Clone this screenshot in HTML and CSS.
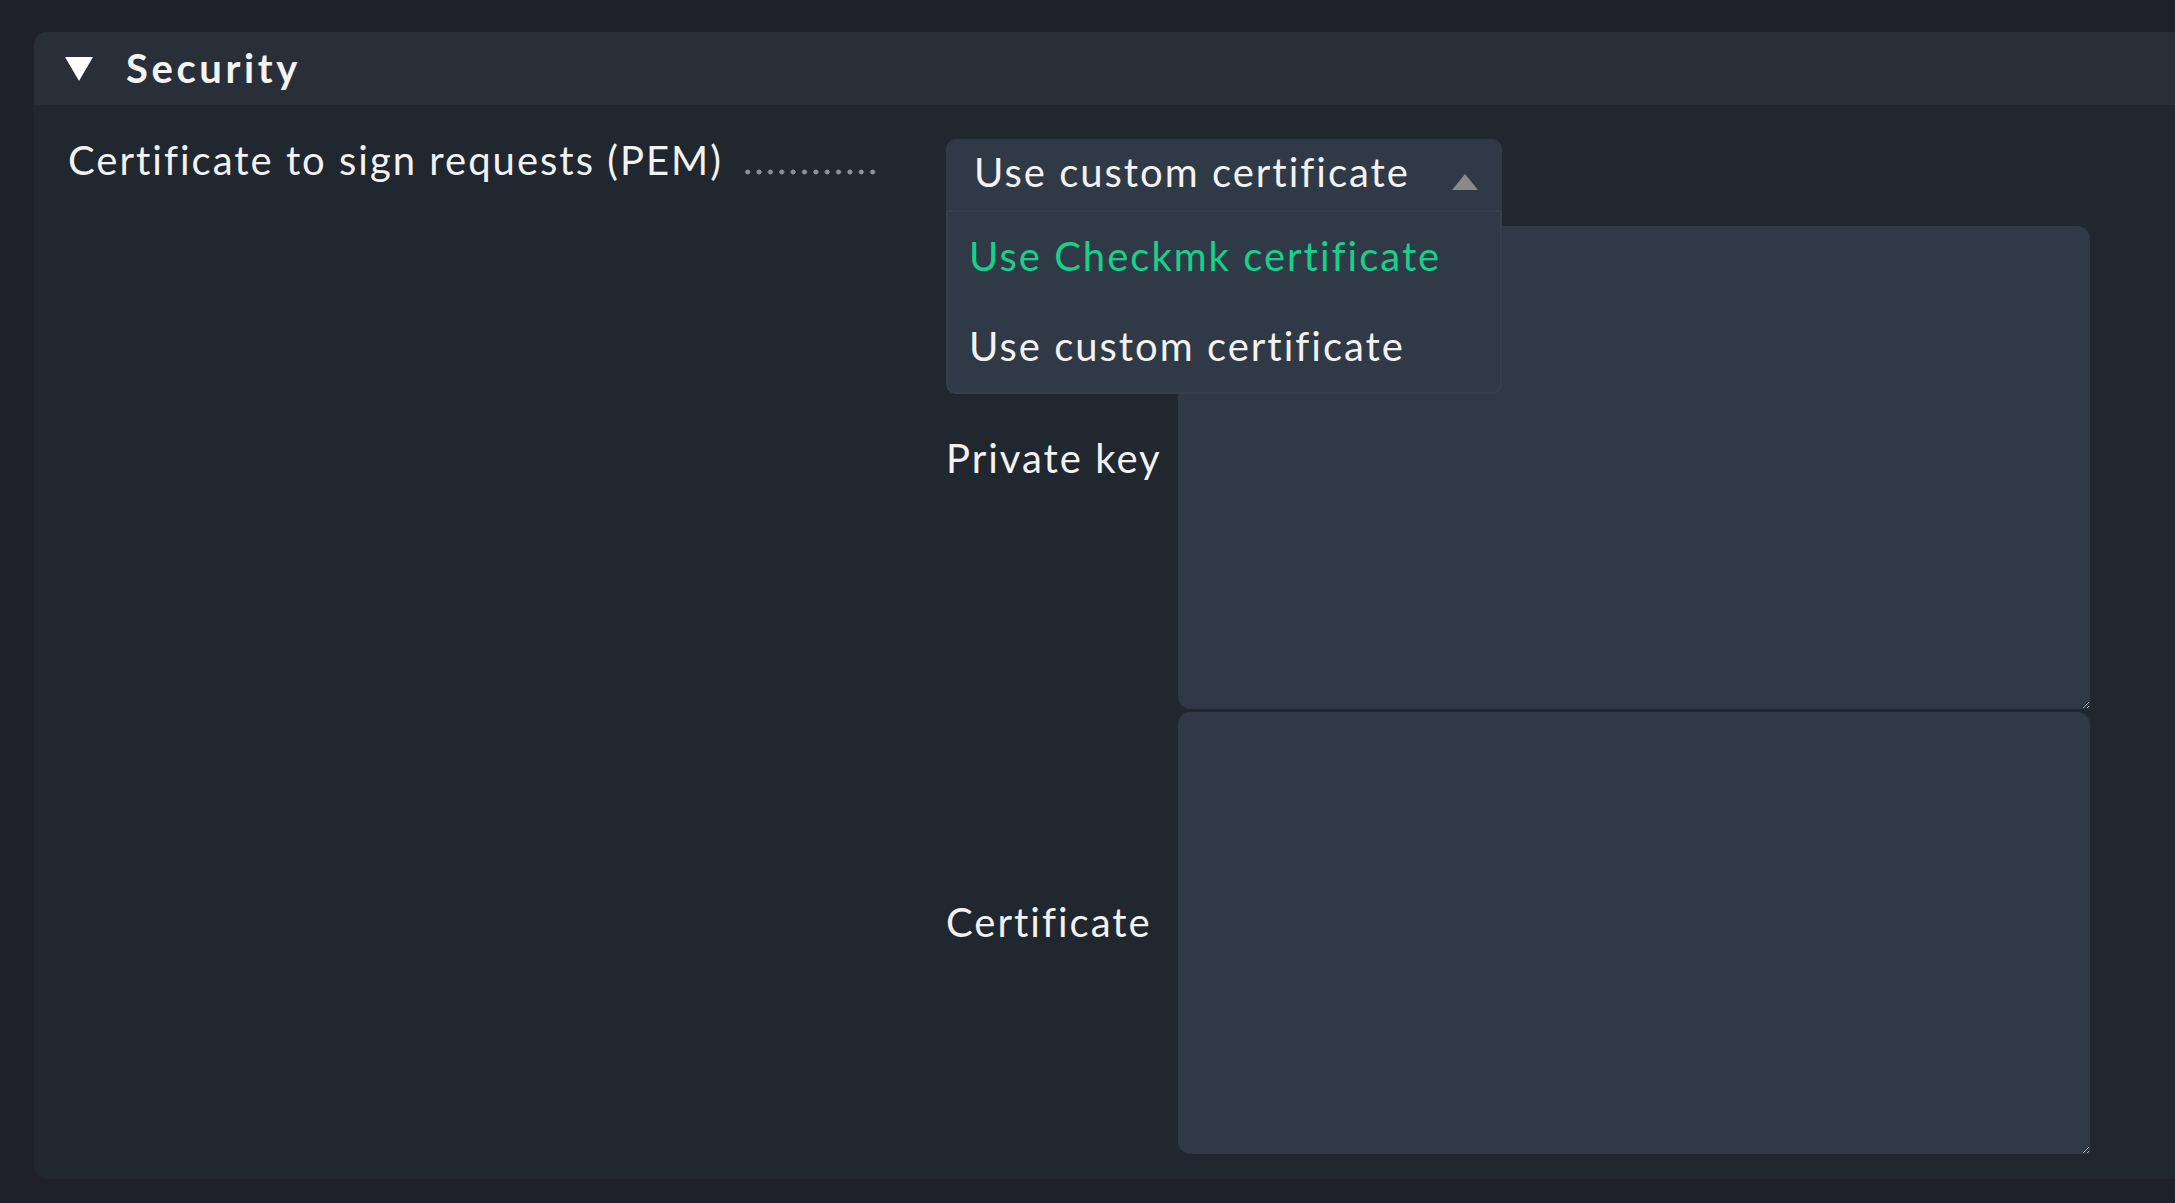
FILE: index.html
```html
<!DOCTYPE html>
<html lang="en">
<head>
<meta charset="utf-8">
<title>Security</title>
<link rel="stylesheet" href="styles.css">
</head>
<body>
<div class="page">
  <div class="panel">
    <div class="panel-header">
      <span class="caret"></span>
      <span class="panel-title">Security</span>
    </div>
    <div class="panel-body">
      <div class="row-label">
        <span class="label-text">Certificate to sign requests (PEM)</span>
        <span class="dots"></span>
      </div>
      <div class="row-value">
        <div class="select-wrap">
          <div class="select">
            <span class="select-text">Use custom certificate</span>
            <span class="select-arrow"></span>
          </div>
          <ul class="dropdown">
            <li class="option option-active">Use Checkmk certificate</li>
            <li class="option">Use custom certificate</li>
          </ul>
        </div>
        <div class="sub-grid">
          <div class="sub-label sub-label-key">Private key</div>
          <textarea class="area area-key"></textarea>
          <div class="sub-label sub-label-cert">Certificate</div>
          <textarea class="area area-cert"></textarea>
        </div>
      </div>
    </div>
  </div>
</div>
</body>
</html>
```
FILE: styles.css
```css
* { box-sizing: border-box; }
html, body { margin: 0; padding: 0; }
body {
  background: #1e2129;
  font-family: Lato, "Noto Sans", sans-serif;
  color: #f2f2f2;
  width: 2175px;
  height: 1203px;
  overflow: hidden;
}
.page {
  padding: 32px 0 0 34px;
}
.panel {
  background: #21272f;
  border-radius: 13px 0 0 13px;
  height: 1147px;
}
.panel-header {
  height: 73px;
  background: #282f39;
  border-radius: 13px 0 0 0;
  display: flex;
  align-items: center;
  padding-left: 31px;
  padding-bottom: 2px;
}
.caret {
  width: 0;
  height: 0;
  border-left: 14px solid transparent;
  border-right: 14px solid transparent;
  border-top: 24px solid #ffffff;
  margin-right: 33px;
  margin-top: 3px;
}
.panel-title {
  font-size: 40px;
  font-weight: 700;
  letter-spacing: 3.6px;
  color: #f4f4f4;
}
.panel-body {
  display: grid;
  grid-template-columns: 878px 1fr;
  padding: 31px 0 0 34px;
}
.row-label {
  font-size: 40px;
  line-height: 48px;
  display: flex;
  align-items: baseline;
}
.label-text {
  letter-spacing: 2px;
}
.dots {
  display: inline-block;
  margin-left: 19px;
  width: 136px;
  height: 6px;
  background-image: radial-gradient(circle, #8d9199 2.2px, transparent 2.8px);
  background-size: 11.36px 6px;
  background-repeat: repeat-x;
}
.row-value {
  display: flex;
  flex-direction: column;
  padding-top: 3px;
}
.select-wrap {
  position: relative;
  width: 556px;
  height: 71px;
}
.select {
  height: 71px;
  background: #303a47;
  border-radius: 10px 10px 0 0;
  display: flex;
  align-items: center;
  justify-content: space-between;
  padding: 0 24px 0 28px;
}
.select-text {
  font-size: 40px;
  letter-spacing: 2px;
  color: #f2f2f2;
  position: relative;
  top: -3px;
}
.select-arrow {
  width: 0;
  height: 0;
  border-left: 13px solid transparent;
  border-right: 13px solid transparent;
  border-bottom: 16px solid #8a8a8a;
  margin-top: 14px;
}
.dropdown {
  position: absolute;
  left: 0;
  top: 71px;
  width: 556px;
  margin: 0;
  padding: 0;
  list-style: none;
  background: #303a47;
  border: 2px solid #36404d;
  border-radius: 0 0 10px 10px;
  z-index: 5;
}
.option {
  height: 90px;
  display: flex;
  align-items: center;
  padding-left: 21px;
  padding-bottom: 3px;
  font-size: 40px;
  letter-spacing: 2px;
  color: #f2f2f2;
}
.option-active {
  color: #16d08b;
}
.sub-grid {
  margin-top: 16px;
  display: grid;
  grid-template-columns: 232px 912px;
  grid-template-rows: 483px 442px;
  row-gap: 3px;
}
.sub-label {
  font-size: 40px;
  line-height: 48px;
  letter-spacing: 2px;
}
.sub-label-key { padding-top: 208px; }
.sub-label-cert { padding-top: 186px; }
.area {
  display: block;
  width: 912px;
  height: 100%;
  background: #303a47;
  border: none;
  border-radius: 13px 13px 0 13px;
  color: #f2f2f2;
  color-scheme: dark;
  outline: none;
  margin: 0;
}
```
